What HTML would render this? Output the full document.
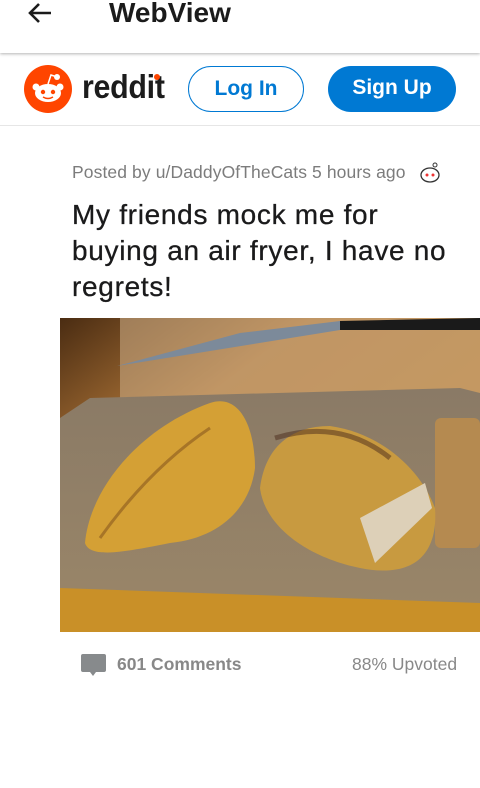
<!DOCTYPE html>
<html><head><meta charset="utf-8"><style>
body{margin:0;width:480px;height:788px;background:#fff;font-family:"Liberation Sans",Roboto,sans-serif;position:relative;overflow:hidden}
.top{position:absolute;left:0;top:0;width:480px;height:53px;background:#fff;box-shadow:0 1px 3px rgba(0,0,0,.3);z-index:2}
.title{position:absolute;left:109px;top:-3px;font-size:28px;font-weight:bold;color:#1b1b1b}
.hdr{position:absolute;top:54px;left:0;width:480px;height:71px;border-bottom:1px solid #e6e6e6}
.btn{position:absolute;top:12px;height:46px;border-radius:24px;box-sizing:border-box;font-weight:bold;font-size:21px;text-align:center;line-height:44px}
.meta{position:absolute;left:72px;top:162px;font-size:17.5px;color:#7c7c7c;letter-spacing:0.1px;white-space:nowrap}
h1{position:absolute;left:72px;top:197px;margin:0;font-size:28px;font-weight:normal;line-height:36px;color:#1a1a1b;white-space:nowrap;letter-spacing:0.7px;-webkit-text-stroke:0.3px #1a1a1b}
.foot{position:absolute;top:654px;font-size:17.5px;color:#888}
</style></head><body>
<div class="top">
<svg style="position:absolute;left:26px;top:0" width="28" height="28" viewBox="0 0 28 28"><path d="M25 13H5M13 4L4 13l9 9" fill="none" stroke="#1b1b1b" stroke-width="2.6"/></svg>
<div class="title">WebView</div>
</div>
<div class="hdr">
<svg style="position:absolute;left:24px;top:11px" width="48" height="48" viewBox="0 0 48 48"><circle cx="24" cy="24" r="24" fill="#ff4500"/><ellipse cx="24" cy="28" rx="13" ry="9" fill="#fff"/><circle cx="12" cy="22" r="3.5" fill="#fff"/><circle cx="36" cy="22" r="3.5" fill="#fff"/><circle cx="33" cy="12" r="3" fill="#fff"/><path d="M24 19l3-9 6 2" stroke="#fff" stroke-width="1.5" fill="none"/><circle cx="19" cy="27" r="2.2" fill="#ff4500"/><circle cx="29" cy="27" r="2.2" fill="#ff4500"/><path d="M19 32q5 3 10 0" stroke="#ff4500" stroke-width="1.5" fill="none"/></svg>
<div style="position:absolute;left:82px;top:14px;font-size:33px;color:#1c1c1c;letter-spacing:-0.3px;font-weight:bold;transform:scaleX(.92);transform-origin:left">reddit</div>
<div style="position:absolute;left:154px;top:20px;width:6px;height:6px;border-radius:3px;background:#ff4500"></div>
<div class="btn" style="left:188px;width:116px;border:1px solid #0079d3;color:#0079d3">Log In</div>
<div class="btn" style="left:328px;width:128px;background:#0079d3;color:#fff">Sign Up</div>
</div>
<div class="meta">Posted by u/DaddyOfTheCats 5 hours ago</div>
<svg style="position:absolute;left:418px;top:160px" width="26" height="26" viewBox="0 0 26 26"><ellipse cx="12" cy="15" rx="9" ry="7" fill="#fff" stroke="#333" stroke-width="1.3"/><circle cx="17" cy="5" r="2" fill="none" stroke="#333"/><circle cx="9" cy="15" r="1.5" fill="#e33"/><circle cx="15" cy="15" r="1.5" fill="#e33"/></svg>
<h1>My friends mock me for<br>buying an air fryer, I have no<br>regrets!</h1>
<svg style="position:absolute;left:60px;top:318px" width="420" height="314" viewBox="0 0 420 314">
<defs><linearGradient id="w" x1="0" y1="0" x2="1" y2="1"><stop offset="0" stop-color="#4a2c12"/><stop offset=".3" stop-color="#b57a3a"/><stop offset="1" stop-color="#c98a2a"/></linearGradient>
<linearGradient id="b" x1="0" y1="0" x2="0" y2="1"><stop offset="0" stop-color="#8a7a66"/><stop offset="1" stop-color="#9a8668"/></linearGradient></defs>
<rect width="420" height="314" fill="url(#w)"/>
<rect x="60" y="0" width="360" height="80" fill="#c8a882" opacity=".6"/>
<path d="M0 100L30 80 400 70 420 75 420 300 0 290Z" fill="url(#b)"/>
<path d="M0 270L420 285 420 314 0 314Z" fill="#c99028"/>
<rect x="375" y="100" width="45" height="130" rx="6" fill="#b58a50"/>
<path d="M57 48L180 15 280 3 280 12Z" fill="#7c8a9a"/>
<path d="M280 3L420 0 420 12 280 12Z" fill="#1a1a1a"/>
<path d="M25 225C30 170 80 110 150 85 180 75 195 110 195 150 190 190 160 220 110 225 60 235 30 240 25 225Z" fill="#d4a035"/>
<path d="M200 170C205 130 230 108 270 108 320 115 360 150 375 190 378 230 360 262 300 250 250 240 205 210 200 170Z" fill="#c89a40"/>
<path d="M300 200L365 165 372 190 315 245Z" fill="#ddd0b8"/>
<path d="M40 220Q90 150 150 110" stroke="#7a4a1a" stroke-width="3" fill="none" opacity=".5"/>
<path d="M215 120Q280 100 330 140" stroke="#4a2a1a" stroke-width="5" fill="none" opacity=".5"/>
</svg>
<svg style="position:absolute;left:81px;top:654px" width="25" height="26" viewBox="0 0 25 26"><path d="M2 0H23a2 2 0 0 1 2 2V16a2 2 0 0 1-2 2H15l-3 4-3-4H2a2 2 0 0 1-2-2V2a2 2 0 0 1 2-2Z" fill="#878a8c"/></svg>
<div class="foot" style="left:117px;font-weight:bold">601 Comments</div>
<div class="foot" style="left:352px">88% Upvoted</div>
</body></html>
